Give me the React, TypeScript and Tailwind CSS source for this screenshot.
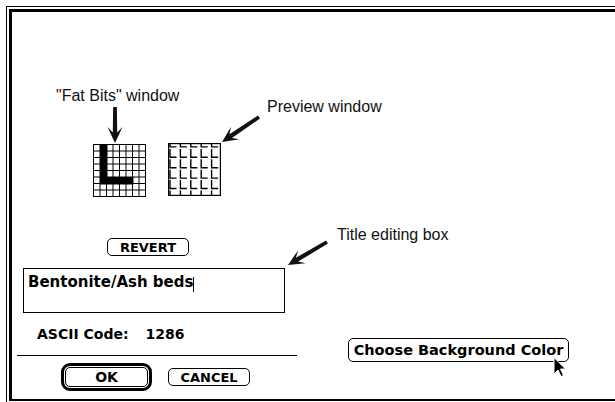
import React from "react";

const chicago = "font-['DejaVu_Sans',sans-serif] font-bold";
const helv = "font-['Liberation_Sans',Arial,sans-serif]";

function arrowPoints(x1: number, y1: number, x2: number, y2: number, shaft = 4.4, headLen = 16, headW = 7.5, notch = 5.5) {
    const dx = x2 - x1;
    const dy = y2 - y1;
    const len = Math.hypot(dx, dy);
    const ux = dx / len;
    const uy = dy / len;
    const nx = -uy;
    const ny = ux;
    const jx = x2 - ux * (headLen - notch);
    const jy = y2 - uy * (headLen - notch);
    const bx = x2 - ux * headLen;
    const by = y2 - uy * headLen;
    const s = shaft / 2;
    const pts = [
        [x1 + nx * s * 0.85, y1 + ny * s * 0.85],
        [jx + nx * s, jy + ny * s],
        [bx + nx * headW, by + ny * headW],
        [x2, y2],
        [bx - nx * headW, by - ny * headW],
        [jx - nx * s, jy - ny * s],
        [x1 - nx * s * 0.85, y1 - ny * s * 0.85],
    ];
    return pts.map((p) => p.join(",")).join(" ");
}

function FatBits() {
    const cell = 6.5;
    const lines = [];
    for (let i = 0; i <= 8; i++) {
        const p = i * cell + 0.5;
        lines.push(<line key={"v" + i} x1={p} y1={0} x2={p} y2={53} stroke="#000" strokeWidth={1} />);
        lines.push(<line key={"h" + i} x1={0} y1={p} x2={53} y2={p} stroke="#000" strokeWidth={1} />);
    }
    return (
        <svg width={53} height={53} viewBox="0 0 53 53">
            <rect x={0} y={0} width={53} height={53} fill="#fff" />
            {lines}
            <rect x={cell + 0.5} y={0} width={cell + 1} height={cell * 6 + 1} fill="#000" />
            <rect x={cell + 0.5} y={cell * 5 + 0.5} width={cell * 5 + 1} height={cell + 1} fill="#000" />
        </svg>
    );
}

function Preview() {
    const tiles = [];
    const pitchX = 10.4;
    const pitchY = 10.4;
    for (let r = 0; r < 6; r++) {
        for (let c = 0; c < 5; c++) {
            const x0 = c * pitchX;
            const y0 = -5.5 + r * pitchY;
            tiles.push(
                <path
                    key={r + "-" + c}
                    d={`M${x0 + 2} ${y0 + 1} V${y0 + 9.4} H${x0 + 8.5}`}
                    stroke="#000"
                    strokeWidth={1.4}
                    fill="none"
                />
            );
        }
    }
    return (
        <svg width={53} height={53} viewBox="0 0 53 53">
            <rect x={0} y={0} width={53} height={53} fill="#fff" />
            <g clipPath="url(#pv)">{tiles}</g>
            <clipPath id="pv">
                <rect x={1} y={1} width={51} height={51} />
            </clipPath>
            <rect x={0.6} y={0.6} width={51.8} height={51.8} fill="none" stroke="#000" strokeWidth={1.2} />
        </svg>
    );
}

function MacButton({ label, className }: { label: string; className: string }) {
    return (
        <div className={`flex items-center justify-center bg-white border border-black rounded-[5px] text-black leading-none ${chicago} ${className}`}>
            {label}
        </div>
    );
}

export default function App() {
    return (
        <div className="relative w-[615px] h-[402px] overflow-hidden bg-white pl-[6px] pt-[6px]">
            <div className="h-[396px] border-l border-t border-black pl-[2px] pt-[2px]">
                <div className="h-[392px] border-l-[3px] border-t-[3px] border-b-[2px] border-black flex flex-col">
                    {/* callout labels */}
                    <div className={`flex items-start pl-[44px] pt-[76px] text-[16px] leading-[16px] text-[#111] ${helv}`}>
                        <div className="w-[211px] whitespace-nowrap">"Fat Bits" window</div>
                        <div className="mt-[11px] whitespace-nowrap">Preview window</div>
                    </div>

                    {/* fat bits + preview */}
                    <div className="flex items-start pl-[81px] mt-[28px]">
                        <div className="mt-[1px]">
                            <FatBits />
                        </div>
                        <div className="ml-[22px]">
                            <Preview />
                        </div>
                    </div>

                    {/* revert + label */}
                    <div className="flex items-start pl-[95px]">
                        <MacButton label="REVERT" className="mt-[41px] w-[82px] h-[18px] text-[13px]" />
                        <div className={`ml-[148px] mt-[30px] text-[16px] leading-[16px] text-[#111] whitespace-nowrap ${helv}`}>
                            Title editing box
                        </div>
                    </div>

                    {/* title edit box */}
                    <div className="ml-[11px] mt-[12px] w-[262px] h-[45px] border border-black pl-[4px] pt-[4px] flex items-start">
                        <span className={`text-[15px] leading-[18px] text-black whitespace-nowrap ${chicago}`}>Bentonite/Ash beds</span>
                        <span className="mt-[4px] w-px h-[15px] bg-black" />
                    </div>

                    {/* bottom area */}
                    <div className="flex items-start">
                        <div className="ml-[5px] w-[280px] flex flex-col">
                            <div className={`mt-[13px] pl-[20px] text-[14px] leading-[16px] text-black whitespace-nowrap ${chicago}`}>
                                <span>ASCII Code:</span>
                                <span className="ml-[17px]">1286</span>
                            </div>
                            <div className="mt-[13px] h-px bg-black" />
                            <div className="mt-[7px] pl-[44px] flex items-center">
                                <div className="w-[91px] h-[28px] border-[3px] border-black rounded-[9px] p-px">
                                    <MacButton label="OK" className="w-full h-full text-[14px]" />
                                </div>
                                <MacButton label="CANCEL" className="ml-[16px] w-[82px] h-[18px] text-[13px]" />
                            </div>
                        </div>
                        <div className="ml-[51px] mt-[25px]">
                            <MacButton label="Choose Background Color" className="w-[221px] h-[24px] text-[14.5px]" />
                        </div>
                    </div>
                </div>
            </div>

            {/* callout arrows and mouse pointer */}
            <svg className="absolute inset-0 pointer-events-none" width={615} height={402} viewBox="0 0 615 402">
                <polygon points={arrowPoints(115, 107, 115, 143)} fill="#111" />
                <polygon points={arrowPoints(259, 117, 222, 142)} fill="#111" />
                <polygon points={arrowPoints(327, 242, 288, 265)} fill="#111" />
                <path
                    d="M554 357.5 L554 374 L558 370 L561 376.5 L563.5 375.5 L560.5 369 L565.5 369 Z"
                    fill="#000"
                    stroke="#fff"
                    strokeWidth={1}
                    strokeLinejoin="miter"
                />
            </svg>
        </div>
    );
}
